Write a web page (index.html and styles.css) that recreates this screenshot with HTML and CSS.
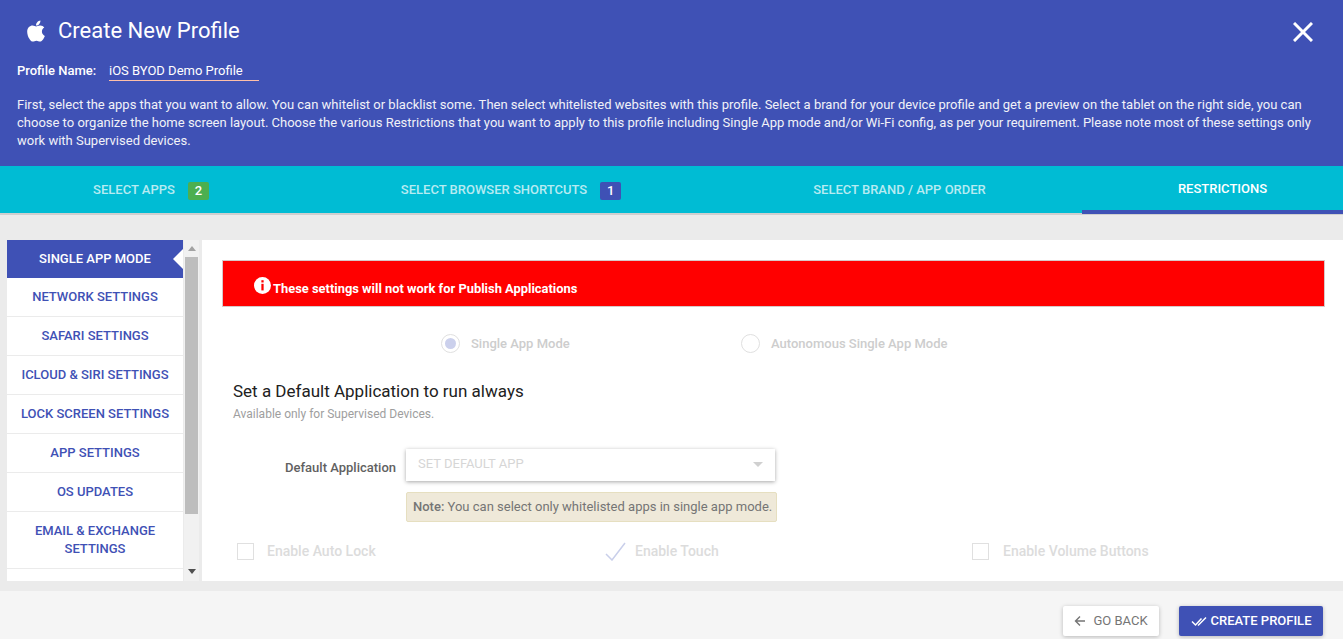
FILE: index.html
```html
<!DOCTYPE html>
<html lang="en">
<head>
    <meta charset="UTF-8">
    <title>Create New Profile</title>
    <link rel="stylesheet" href="styles.css">
</head>
<body>
    <div class="header">
        <div class="titlerow">
            <svg class="apple" viewBox="0 0 384 512"><path d="M318.7 268.7c-.2-36.7 16.4-64.4 50-84.8-18.8-26.9-47.2-41.7-84.7-44.6-35.5-2.8-74.3 20.7-88.5 20.7-15 0-49.4-19.7-76.4-19.7C63.3 141.2 4 184.8 4 273.5q0 39.3 14.4 81.2c12.8 36.7 59 126.7 107.2 125.2 25.2-.6 43-17.9 75.8-17.9 31.8 0 48.3 17.9 76.4 17.9 48.6-.7 90.4-82.5 102.6-119.3-65.2-30.7-61.7-90-61.7-91.9zm-56.6-164.2c27.3-32.4 24.8-61.9 24-72.5-24.1 1.4-52 16.4-67.9 34.9-17.5 19.8-27.8 44.3-25.6 71.9 26.1 2 49.9-11.4 69.5-34.3z"/></svg>
            <h1>Create New Profile</h1>
            <svg class="close" viewBox="0 0 20 20"><path d="M1 1L19 19M19 1L1 19"/></svg>
        </div>
        <div class="namerow">
            <span class="namelabel">Profile Name:</span>
            <span class="namevalue">iOS BYOD Demo Profile</span>
        </div>
        <p class="intro">First, select the apps that you want to allow. You can whitelist or blacklist some. Then select whitelisted websites with this profile. Select a brand for your device profile and get a preview on the tablet on the right side, you can choose to organize the home screen layout. Choose the various Restrictions that you want to apply to this profile including Single App mode and/or Wi-Fi config, as per your requirement. Please note most of these settings only work with Supervised devices.</p>
    </div>

    <div class="tabs">
        <div class="tab">SELECT APPS <span class="badge green">2</span></div>
        <div class="tab">SELECT BROWSER SHORTCUTS <span class="badge indigo">1</span></div>
        <div class="tab brand">SELECT BRAND / APP ORDER</div>
        <div class="tab active">RESTRICTIONS</div>
    </div>

    <div class="main">
        <div class="sidebar">
            <div class="menu">
                <div class="item selected">SINGLE APP MODE</div>
                <div class="item">NETWORK SETTINGS</div>
                <div class="item">SAFARI SETTINGS</div>
                <div class="item">ICLOUD &amp; SIRI SETTINGS</div>
                <div class="item">LOCK SCREEN SETTINGS</div>
                <div class="item">APP SETTINGS</div>
                <div class="item">OS UPDATES</div>
                <div class="item twolines">EMAIL &amp; EXCHANGE SETTINGS</div>
                <div class="item"></div>
            </div>
            <div class="scrollbar">
                <span class="arrow up"></span>
                <span class="thumb"></span>
                <span class="arrow down"></span>
            </div>
        </div>

        <div class="content">
            <div class="alert">
                <svg class="info" viewBox="0 0 18 18"><circle cx="9" cy="9" r="9"/><rect x="7.8" y="3.4" width="2.4" height="2.4"/><rect x="7.8" y="7.2" width="2.4" height="7"/></svg>
                <span class="alerttext">These settings will not work for Publish Applications</span>
            </div>

            <div class="radios">
                <label class="radio"><span class="circle on"></span>Single App Mode</label>
                <label class="radio"><span class="circle"></span>Autonomous Single App Mode</label>
            </div>

            <h2>Set a Default Application to run always</h2>
            <p class="sub">Available only for Supervised Devices.</p>

            <div class="formrow">
                <div class="formlabel">Default Application</div>
                <div class="select">SET DEFAULT APP<span class="caret"></span></div>
            </div>
            <div class="note"><b>Note:</b> You can select only whitelisted apps in single app mode.</div>

            <div class="checks">
                <div class="check"><span class="box"></span>Enable Auto Lock</div>
                <div class="check touch">
                    <svg class="tick" viewBox="0 0 21 19"><path d="M1 12L7 18L20 1"/></svg>Enable Touch
                </div>
                <div class="check volume"><span class="box"></span>Enable Volume Buttons</div>
            </div>
        </div>
    </div>

    <div class="footer">
        <button class="backbtn">
            <svg class="btnicon" viewBox="0 0 12 12"><path d="M11 6H1.5M6 1.5L1.5 6L6 10.5"/></svg>GO BACK
        </button>
        <button class="createbtn">
            <svg class="btnicon" viewBox="0 0 16 12"><path d="M1 6.5L4.5 10L10.5 3.5M7 9.5L7.5 10L15 2.5"/></svg>CREATE PROFILE
        </button>
    </div>
</body>
</html>
```

FILE: styles.css
```css
*{
    box-sizing:border-box;
}
html,body{
    margin:0;
    height:100%;
    overflow:hidden;
}
body{
    display:flex;
    flex-direction:column;
    height:639px;
    font-family:Roboto,"Liberation Sans",sans-serif;
    font-size:13px;
    background-color:#ebebeb;
}

/* header */
.header{
    height:166px;
    padding:0 17px;
    background-color:#3f51b5;
    color:#fff;
}
.titlerow{
    display:flex;
    align-items:center;
    height:61px;
}
.apple{
    width:18px;
    height:24px;
    margin-left:10px;
    fill:#fff;
}
h1{
    margin:0 0 0 13px;
    font-size:22px;
    font-weight:400;
}
.close{
    width:20px;
    height:20px;
    margin-left:auto;
    margin-right:13px;
    margin-top:3px;
    fill:none;
    stroke:#fff;
    stroke-width:3;
}
.namerow{
    display:flex;
    align-items:flex-end;
    height:20px;
}
.namelabel{
    width:92px;
    font-weight:500;
    line-height:20px;
}
.namevalue{
    width:150px;
    line-height:19px;
    border-bottom:1px solid #ffbfa8;
}
.intro{
    margin:15px 0 0;
    line-height:18px;
    color:#f1f1f8;
}

/* tabs */
.tabs{
    display:grid;
    grid-template-columns:302px 418px 362px 261px;
    height:49px;
    background-color:#00bcd4;
    border-bottom:2px solid #cfcfcf;
}
.tab{
    display:flex;
    align-items:center;
    justify-content:center;
    gap:13px;
    height:47px;
    font-size:13px;
    font-weight:500;
    color:rgba(255,255,255,.72);
}
.tab.brand{
    padding-right:3px;
}
.tab.active{
    height:48px;
    padding-left:20px;
    color:#fff;
    border-bottom:4px solid #3f51b5;
}
.badge{
    width:21px;
    height:18px;
    margin-top:2px;
    border-radius:2px;
    font-size:13px;
    line-height:18px;
    text-align:center;
    color:#fff;
}
.green{
    background-color:#4caf50;
}
.indigo{
    background-color:#3f51b5;
}

/* main */
.main{
    display:flex;
    height:341px;
    margin-top:25px;
    padding-left:7px;
}
.sidebar{
    display:flex;
    flex-shrink:0;
    width:192px;
    margin-right:3px;
}
.menu{
    flex-shrink:0;
    width:176px;
    height:341px;
    overflow:hidden;
    background-color:#fff;
}
.item{
    display:flex;
    align-items:center;
    justify-content:center;
    min-height:39px;
    padding:9px 10px 10px;
    font-size:13px;
    font-weight:500;
    line-height:18px;
    text-align:center;
    color:#3f51b5;
    border-bottom:1px solid #ebebeb;
}
.twolines{
    padding:10px 14px;
}
.selected{
    position:relative;
    height:38px;
    min-height:38px;
    padding:0;
    color:#fff;
    background-color:#3f51b5;
    border-bottom:none;
}
.selected::after{
    content:"";
    position:absolute;
    right:0;
    top:9px;
    border-style:solid;
    border-width:10px 10px 10px 0;
    border-color:transparent #fff transparent transparent;
}
.scrollbar{
    display:flex;
    flex-direction:column;
    align-items:center;
    width:15px;
    padding-top:6px;
    margin-left:1px;
    background-color:#f1f1f1;
}
.arrow{
    width:0;
    height:0;
    border-style:solid;
    border-color:transparent;
}
.up{
    border-width:0 4px 5px;
    border-bottom-color:#a3a3a3;
}
.down{
    margin-top:55px;
    border-width:5px 4px 0;
    border-top-color:#505050;
}
.thumb{
    width:13px;
    height:257px;
    margin-top:6px;
    background-color:#bdbdbd;
}

/* content */
.content{
    flex:1;
    padding:20px 18px 0 20px;
    background-color:#fff;
}
.alert{
    display:flex;
    align-items:center;
    gap:2px;
    height:47px;
    padding:5px 0 0 31px;
    font-weight:700;
    font-size:12.9px;
    color:#fff;
    background-color:#f00;
    border:1px solid #d8c8c8;
}
.alerttext{
    margin-top:4px;
}
.info{
    width:17px;
    height:17px;
    margin-top:-1px;
}
.info circle{
    fill:#fff;
}
.info rect{
    fill:#f00;
}
.radios{
    display:flex;
    gap:0;
    height:19px;
    margin:27px 0 0 219px;
    color:#cdcdcd;
    font-weight:500;
}
.radio{
    display:flex;
    align-items:center;
    width:300px;
}
.circle{
    display:flex;
    align-items:center;
    justify-content:center;
    width:19px;
    height:19px;
    margin-right:11px;
    border:1px solid #e0e0e0;
    border-radius:50%;
}
.circle.on::before{
    content:"";
    width:11px;
    height:11px;
    border-radius:50%;
    background-color:#cbd0ec;
}
h2{
    margin:28px 0 0 11px;
    font-size:17px;
    font-weight:400;
    line-height:20px;
    color:#212121;
}
.sub{
    margin:6px 0 0 11px;
    font-size:12px;
    line-height:15px;
    color:#9e9e9e;
}
.formrow{
    display:flex;
    align-items:center;
    margin-top:27px;
}
.formlabel{
    width:174px;
    padding-top:5px;
    font-weight:500;
    text-align:right;
    color:#616161;
}
.select{
    position:relative;
    width:369px;
    height:32px;
    margin-left:10px;
    padding-left:12px;
    font-size:13px;
    line-height:30px;
    color:#d6d6d6;
    background-color:#fff;
    box-shadow:0 1px 4px rgba(0,0,0,.35);
}
.caret{
    position:absolute;
    right:12px;
    top:13px;
    border-style:solid;
    border-width:5px 5px 0;
    border-color:#d0d0d0 transparent transparent;
}
.note{
    width:371px;
    height:30px;
    margin:11px 0 0 184px;
    padding-left:6px;
    line-height:28px;
    color:#757575;
    background-color:#efe9d9;
    border:1px solid #e6dfc0;
    border-radius:2px;
}
.note b{
    font-weight:500;
}
.checks{
    display:grid;
    grid-template-columns:368px 367px auto;
    margin:19px 0 0 15px;
    font-weight:500;
    font-size:14px;
    color:#dcdcdc;
}
.check{
    display:flex;
    align-items:center;
    height:20px;
}
.box{
    width:17px;
    height:17px;
    margin-right:13px;
    border:1px solid #e0e0e0;
}
.volume .box{
    margin-right:14px;
}
.tick{
    width:21px;
    height:19px;
    margin-right:9px;
    fill:none;
    stroke:#c9cfea;
    stroke-width:1.5;
}

/* footer */
.footer{
    display:flex;
    justify-content:flex-end;
    align-items:flex-start;
    gap:20px;
    height:48px;
    margin-top:10px;
    padding:15px 20px 0 0;
    background-color:#f5f5f5;
}
button{
    display:flex;
    align-items:center;
    justify-content:center;
    height:30px;
    padding:0 0 1px;
    border:none;
    border-radius:2px;
    font-family:Roboto,"Liberation Sans",sans-serif;
    font-size:13px;
    box-shadow:0 1px 4px rgba(0,0,0,.25);
}
.backbtn{
    width:96px;
    color:#757575;
    background-color:#fff;
}
.createbtn{
    width:144px;
    font-weight:500;
    color:#fff;
    background-color:#3f51b5;
}
.btnicon{
    height:12px;
    fill:none;
    stroke:currentColor;
}
.backbtn .btnicon{
    width:12px;
    margin-right:7px;
    stroke-width:1.4;
}
.createbtn .btnicon{
    width:16px;
    margin-right:4px;
    stroke-width:1.5;
}
```
